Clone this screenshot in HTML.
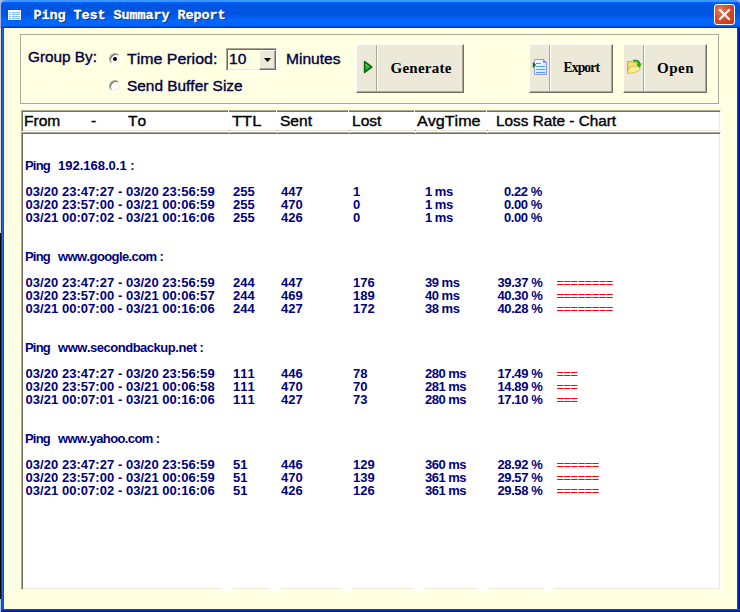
<!DOCTYPE html>
<html><head><meta charset="utf-8"><title>Ping Test Summary Report</title>
<style>
html,body{margin:0;padding:0}
body{width:740px;height:612px;overflow:hidden;position:relative;background:#0831d9;font-family:"Liberation Sans",sans-serif}
.abs,.abs *{position:absolute}
div,span{position:absolute;box-sizing:border-box;white-space:pre;font-kerning:none}
#strip{left:0;top:0;width:1px;height:612px;background:linear-gradient(#a3b4e6 0,#a3b4e6 28px,#e6e2cc 28px,#e6e2cc 233px,#000 233px,#000 599px,#c4cdf0 599px)}
#frame{left:1px;top:0;width:739px;height:612px;background:linear-gradient(90deg,#0a34e8 0,#0a34e8 1px,#1766f0 1px,#1766f0 2px,#0450dc 2px,#0450dc 736px,#0840e0 736px,#0840e0 737px,#0028b8 737px,#0028b8 738px,#001890 738px)}
#bot{left:1px;top:609px;width:739px;height:3px;background:linear-gradient(#0a48e0 0,#0a48e0 1px,#0028b0 1px,#0028b0 2px,#001890 2px)}
#title{left:1px;top:0;width:739px;height:28px;border-radius:5px 5px 0 0;
background:linear-gradient(#3d95ff 0,#3d95ff 2px,#0066ff 2px,#0066ff 3px,#005ae8 3px,#0055e0 5px,#0055e0 14px,#0062f5 19px,#0066ff 20px,#0066ff 26px,#0050d8 26px,#0050d8 27px,#0030c0 27px)}
#corner{left:0;top:0;width:740px;height:8px;background:#a3b4e6}
#ttext{left:33.5px;top:5.6px;height:20px;line-height:20px;font-family:"Liberation Mono",monospace;font-weight:bold;font-size:13.5px;letter-spacing:-0.1px;-webkit-text-stroke:0.3px #fff;color:#fff;text-shadow:1px 1px 0 #0a1a78}
#client{left:4px;top:28px;width:733px;height:581px;background:#ffffe1}
#close{left:714px;top:4px;width:21px;height:21px;border:1px solid #fff;border-radius:3px;background:radial-gradient(circle at 30% 30%,#e8795a 0,#d8472a 50%,#c23412 100%)}
.lbl{font-size:14px;line-height:16px;height:16px;color:#000040;transform-origin:0 0;transform:scaleX(1.11);-webkit-text-stroke:0.35px #000040}
.hd{font-size:14px;line-height:16px;height:16px;color:#000;transform-origin:0 0;transform:scaleX(1.11);-webkit-text-stroke:0.35px #000}
.grp1{left:20px;top:34px;width:699px;height:70px;border:1px solid #aca899}
.grp2{left:21px;top:35px;width:699px;height:70px;border:1px solid #fff}
.btn{background:#ece9d8;border:1px solid;border-color:#fff #716f64 #716f64 #fff;box-shadow:inset -1px -1px 0 #aca899}
.btxt{font-family:"Liberation Serif",serif;font-weight:bold;color:#000;font-size:15px;line-height:18px;height:18px}
.sunk{border:1px solid;border-color:#aca899 #fff #fff #aca899;box-shadow:inset 1px 1px 0 #716f64,inset -1px -1px 0 #ece9d8}
.radio{width:12px;height:12px;border-radius:50%;background:#fff;border:1px solid;border-color:#aca899 #fff #fff #aca899;box-shadow:inset 1px 1px 0 #716f64,inset -1px -1px 0 #ece9d8}
.ln{left:0;width:740px;height:13px;line-height:13px;font-size:13px;font-weight:bold;color:#000080}
.ln span{top:0;height:13px;letter-spacing:0.04px}
.ln span.ch{color:#ff0000;font-weight:normal;letter-spacing:-0.55px}
.tick{width:1px;background:#f4f2e6}
.notch{width:10px;height:4px;top:588px;background:#fff}
</style></head><body>
<div id="strip"></div>
<div id="frame"></div>
<div id="corner"></div>
<div id="title"></div>
<div id="bot"></div>
<div id="client"></div>

<!-- title icon -->
<svg style="position:absolute;left:7px;top:8px" width="16" height="14" viewBox="0 0 16 14">
<rect x="0.5" y="1" width="14" height="11.5" fill="#0046c8" opacity="0.6"/>
<rect x="1" y="2" width="13" height="10" fill="#fff"/>
<g fill="#7db9f5"><rect x="2" y="4" width="2" height="1"/><rect x="2" y="6" width="2" height="1"/><rect x="2" y="8" width="2" height="1"/><rect x="2" y="10" width="2" height="1"/>
<rect x="5" y="4" width="8" height="1"/><rect x="5" y="6" width="8" height="1"/><rect x="5" y="8" width="8" height="1"/><rect x="5" y="10" width="8" height="1"/></g>
</svg>
<div id="ttext">Ping Test Summary Report</div>
<div id="close"></div>
<svg style="position:absolute;left:714px;top:4px" width="21" height="21" viewBox="0 0 21 21"><path d="M6 6 L15 15 M15 6 L6 15" stroke="#fff" stroke-width="2.2" stroke-linecap="square"/></svg>

<!-- group box -->
<div class="grp2"></div>
<div class="grp1"></div>

<div class="lbl" style="left:27.5px;top:49px;transform:scaleX(1.095)">Group By:</div>
<div class="radio" style="left:109px;top:53px"></div>
<div style="left:113px;top:57px;width:4px;height:4px;border-radius:50%;background:#000"></div>
<div class="lbl" style="left:127px;top:51px;transform:scaleX(1.138)">Time Period:</div>
<div class="radio" style="left:109px;top:80px"></div>
<div class="lbl" style="left:126.5px;top:78px;transform:scaleX(1.10)">Send Buffer Size</div>

<!-- combo -->
<div class="sunk" style="left:226px;top:48px;width:51px;height:23px;background:#ffffe1"></div>
<div class="lbl" style="left:229px;top:51px">10</div>
<div class="btn" style="left:259px;top:50px;width:17px;height:20px"></div>
<svg style="position:absolute;left:264px;top:58px" width="7" height="4" viewBox="0 0 7 4"><path d="M0 0H7L3.5 4Z" fill="#000"/></svg>
<div class="lbl" style="left:286px;top:51px">Minutes</div>

<!-- Generate -->
<div class="btn" style="left:356px;top:44px;width:108px;height:49px"></div>
<div style="left:376px;top:45px;width:1px;height:46px;background:#aca899"></div>
<div style="left:377px;top:45px;width:1px;height:46px;background:#fff"></div>
<svg style="position:absolute;left:363px;top:60px" width="11" height="14" viewBox="0 0 11 14"><defs><linearGradient id="gg" x1="0" y1="0" x2="0" y2="1"><stop offset="0" stop-color="#8ee58e"/><stop offset="0.5" stop-color="#35b835"/><stop offset="1" stop-color="#1f9f1f"/></linearGradient></defs><path d="M1.6 1.6 L8.7 7 L1.6 12.4 Z" fill="url(#gg)" stroke="#0a6a0a" stroke-width="1.6" stroke-linejoin="round"/></svg>
<div class="btxt" style="left:390.5px;top:59px;letter-spacing:0.25px">Generate</div>

<!-- Export -->
<div class="btn" style="left:529px;top:44px;width:84px;height:49px"></div>
<div style="left:549px;top:45px;width:1px;height:46px;background:#aca899"></div>
<div style="left:550px;top:45px;width:1px;height:46px;background:#fff"></div>
<svg style="position:absolute;left:532px;top:58px" width="16" height="18" viewBox="0 0 16 18">
<defs><linearGradient id="dg" x1="0" y1="0" x2="1" y2="1"><stop offset="0" stop-color="#ffffff"/><stop offset="1" stop-color="#c4e0ff"/></linearGradient></defs>
<path d="M2.5 1.5 H11.5 L14.5 4.5 V16.5 H2.5 Z" fill="url(#dg)" stroke="#9498d8" stroke-width="1"/>
<path d="M11.5 1.5 V4.5 H14.5 Z" fill="#7cc0f8" stroke="#8a90d0" stroke-width="1"/>
<g stroke="#4da0ee" stroke-width="1.1"><path d="M4 5.5H8.7M4 8.5H13M4 11.5H13M4 14.5H13"/></g>
<path d="M0.8 3.8 L4.2 7 L0.8 10.2 Z" fill="#0c7a0c"/>
</svg>
<div class="btxt" style="left:563.5px;top:59px;font-size:13.6px;letter-spacing:-0.85px">Export</div>

<!-- Open -->
<div class="btn" style="left:623px;top:44px;width:84px;height:49px"></div>
<div style="left:643px;top:45px;width:1px;height:46px;background:#aca899"></div>
<div style="left:644px;top:45px;width:1px;height:46px;background:#fff"></div>
<svg style="position:absolute;left:626px;top:58px" width="17" height="17" viewBox="0 0 17 17">
<path d="M1.5 3.5 H6 L7 4.5 H11.5 V10 H1.5 Z" fill="#f8de70" stroke="#d6ad20" stroke-width="1"/>
<path d="M1.5 3.5 V15.5" stroke="#d6ad20" stroke-width="1"/>
<path d="M1.5 15.5 L3.6 9.5 L8 8.3 H14.6 L13.2 12.6 L8 14.6 Z" fill="#fdf0a2" stroke="#e6c648" stroke-width="1"/>
<path d="M7 2.6 H10.6 Q13.2 3.2 13.6 6.5" fill="none" stroke="#17981f" stroke-width="1.8"/>
<path d="M10.4 5.6 L15.8 5.6 L13 10.2 Z" fill="#22ad2e"/>
</svg>
<div class="btxt" style="left:657px;top:59px;letter-spacing:0.5px">Open</div>

<!-- list header -->
<div class="sunk" style="left:21px;top:110px;width:700px;height:22px;background:#fff"></div>
<div class="sunk" style="left:21px;top:132px;width:700px;height:458px;background:#fff"></div>
<div class="hd" style="left:24px;top:113px">From</div>
<div class="hd" style="left:91px;top:113px">-</div>
<div class="hd" style="left:128px;top:113px">To</div>
<div class="hd" style="left:231.5px;top:113px;transform:scaleX(1.18)">TTL</div>
<div class="hd" style="left:280px;top:113px">Sent</div>
<div class="hd" style="left:352px;top:113px">Lost</div>
<div class="hd" style="left:416.5px;top:113px;transform:scaleX(1.15)">AvgTime</div>
<div class="hd" style="left:495.5px;top:113px;transform:scaleX(1.095)">Loss Rate - Chart</div>
<div class="tick" style="left:228px;top:110px;height:1px;background:#d8d5c8"></div><div class="tick" style="left:228px;top:111px;height:1px;background:#fff"></div><div class="tick" style="left:229px;top:130px;height:1px;background:#9a9788"></div><div class="tick" style="left:229px;top:132px;height:1px;background:#fff"></div>
<div class="tick" style="left:276px;top:110px;height:1px;background:#d8d5c8"></div><div class="tick" style="left:276px;top:111px;height:1px;background:#fff"></div><div class="tick" style="left:277px;top:130px;height:1px;background:#9a9788"></div><div class="tick" style="left:277px;top:132px;height:1px;background:#fff"></div>
<div class="tick" style="left:348px;top:110px;height:1px;background:#d8d5c8"></div><div class="tick" style="left:348px;top:111px;height:1px;background:#fff"></div><div class="tick" style="left:349px;top:130px;height:1px;background:#9a9788"></div><div class="tick" style="left:349px;top:132px;height:1px;background:#fff"></div>
<div class="tick" style="left:414px;top:110px;height:1px;background:#d8d5c8"></div><div class="tick" style="left:414px;top:111px;height:1px;background:#fff"></div><div class="tick" style="left:415px;top:130px;height:1px;background:#9a9788"></div><div class="tick" style="left:415px;top:132px;height:1px;background:#fff"></div>
<div class="tick" style="left:486px;top:110px;height:1px;background:#d8d5c8"></div><div class="tick" style="left:486px;top:111px;height:1px;background:#fff"></div><div class="tick" style="left:487px;top:130px;height:1px;background:#9a9788"></div><div class="tick" style="left:487px;top:132px;height:1px;background:#fff"></div>
<div class="notch" style="left:222px"></div><div class="notch" style="left:270px"></div><div class="notch" style="left:341px"></div><div class="notch" style="left:414px"></div><div class="notch" style="left:478px"></div><div class="notch" style="left:544px"></div>

<div class="ln" style="top:159px"><span style="left:25px;letter-spacing:-0.8px">Ping</span><span style="left:58px;letter-spacing:0px">192.168.0.1 :</span></div>
<div class="ln" style="top:185px"><span style="left:25.5px">03/20 23:47:27 - 03/20 23:56:59</span><span style="left:233px">255</span><span style="left:281px">447</span><span style="left:353px">1</span><span style="left:425px;letter-spacing:-0.5px">1 ms</span><span style="left:497.5px;letter-spacing:-0.4px">  0.22 %</span></div>
<div class="ln" style="top:198px"><span style="left:25.5px">03/20 23:57:00 - 03/21 00:06:59</span><span style="left:233px">255</span><span style="left:281px">470</span><span style="left:353px">0</span><span style="left:425px;letter-spacing:-0.5px">1 ms</span><span style="left:497.5px;letter-spacing:-0.4px">  0.00 %</span></div>
<div class="ln" style="top:211px"><span style="left:25.5px">03/21 00:07:02 - 03/21 00:16:06</span><span style="left:233px">255</span><span style="left:281px">426</span><span style="left:353px">0</span><span style="left:425px;letter-spacing:-0.5px">1 ms</span><span style="left:497.5px;letter-spacing:-0.4px">  0.00 %</span></div>
<div class="ln" style="top:250px"><span style="left:25px;letter-spacing:-0.8px">Ping</span><span style="left:58px;letter-spacing:-0.6px">www.google.com :</span></div>
<div class="ln" style="top:276px"><span style="left:25.5px">03/20 23:47:27 - 03/20 23:56:59</span><span style="left:233px">244</span><span style="left:281px">447</span><span style="left:353px">176</span><span style="left:425px;letter-spacing:-0.5px">39 ms</span><span style="left:497.5px;letter-spacing:-0.4px">39.37 %</span><span class="ch" style="left:556.5px">========</span></div>
<div class="ln" style="top:289px"><span style="left:25.5px">03/20 23:57:00 - 03/21 00:06:57</span><span style="left:233px">244</span><span style="left:281px">469</span><span style="left:353px">189</span><span style="left:425px;letter-spacing:-0.5px">40 ms</span><span style="left:497.5px;letter-spacing:-0.4px">40.30 %</span><span class="ch" style="left:556.5px">========</span></div>
<div class="ln" style="top:302px"><span style="left:25.5px">03/21 00:07:00 - 03/21 00:16:06</span><span style="left:233px">244</span><span style="left:281px">427</span><span style="left:353px">172</span><span style="left:425px;letter-spacing:-0.5px">38 ms</span><span style="left:497.5px;letter-spacing:-0.4px">40.28 %</span><span class="ch" style="left:556.5px">========</span></div>
<div class="ln" style="top:341px"><span style="left:25px;letter-spacing:-0.8px">Ping</span><span style="left:58px;letter-spacing:-0.48px">www.secondbackup.net :</span></div>
<div class="ln" style="top:367px"><span style="left:25.5px">03/20 23:47:27 - 03/20 23:56:59</span><span style="left:233px">111</span><span style="left:281px">446</span><span style="left:353px">78</span><span style="left:425px;letter-spacing:-0.5px">280 ms</span><span style="left:497.5px;letter-spacing:-0.4px">17.49 %</span><span class="ch" style="left:556.5px">===</span></div>
<div class="ln" style="top:380px"><span style="left:25.5px">03/20 23:57:00 - 03/21 00:06:58</span><span style="left:233px">111</span><span style="left:281px">470</span><span style="left:353px">70</span><span style="left:425px;letter-spacing:-0.5px">281 ms</span><span style="left:497.5px;letter-spacing:-0.4px">14.89 %</span><span class="ch" style="left:556.5px">===</span></div>
<div class="ln" style="top:393px"><span style="left:25.5px">03/21 00:07:01 - 03/21 00:16:06</span><span style="left:233px">111</span><span style="left:281px">427</span><span style="left:353px">73</span><span style="left:425px;letter-spacing:-0.5px">280 ms</span><span style="left:497.5px;letter-spacing:-0.4px">17.10 %</span><span class="ch" style="left:556.5px">===</span></div>
<div class="ln" style="top:432px"><span style="left:25px;letter-spacing:-0.8px">Ping</span><span style="left:58px;letter-spacing:-0.6px">www.yahoo.com :</span></div>
<div class="ln" style="top:458px"><span style="left:25.5px">03/20 23:47:27 - 03/20 23:56:59</span><span style="left:233px">51</span><span style="left:281px">446</span><span style="left:353px">129</span><span style="left:425px;letter-spacing:-0.5px">360 ms</span><span style="left:497.5px;letter-spacing:-0.4px">28.92 %</span><span class="ch" style="left:556.5px">======</span></div>
<div class="ln" style="top:471px"><span style="left:25.5px">03/20 23:57:00 - 03/21 00:06:59</span><span style="left:233px">51</span><span style="left:281px">470</span><span style="left:353px">139</span><span style="left:425px;letter-spacing:-0.5px">361 ms</span><span style="left:497.5px;letter-spacing:-0.4px">29.57 %</span><span class="ch" style="left:556.5px">======</span></div>
<div class="ln" style="top:484px"><span style="left:25.5px">03/21 00:07:02 - 03/21 00:16:06</span><span style="left:233px">51</span><span style="left:281px">426</span><span style="left:353px">126</span><span style="left:425px;letter-spacing:-0.5px">361 ms</span><span style="left:497.5px;letter-spacing:-0.4px">29.58 %</span><span class="ch" style="left:556.5px">======</span></div>
</body></html>
